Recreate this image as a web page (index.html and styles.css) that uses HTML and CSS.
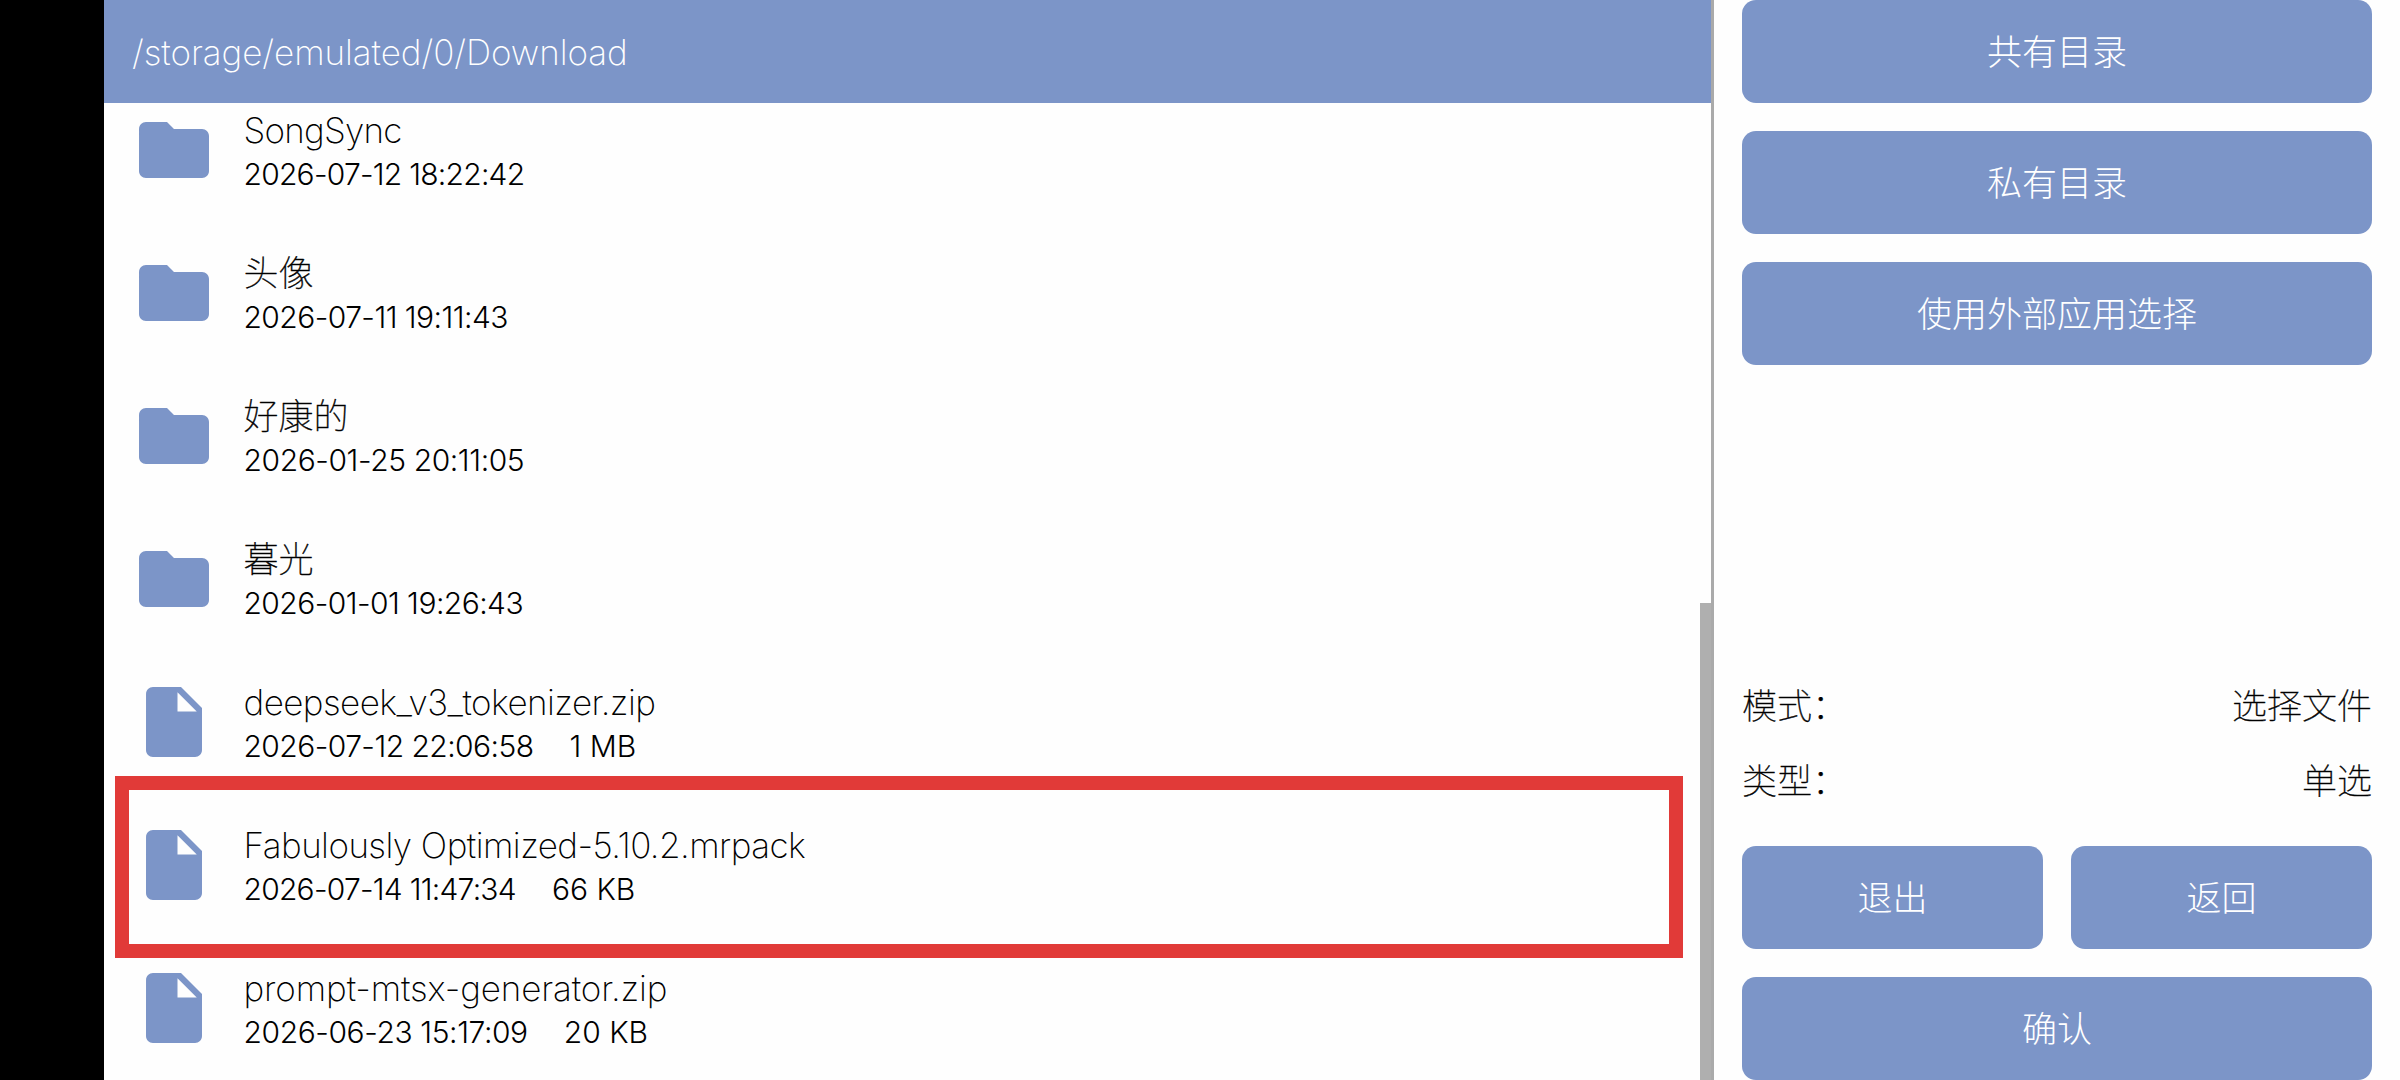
FILE: index.html
```html
<!doctype html>
<html lang="zh-CN">
<head>
<meta charset="UTF-8">
<title>选择文件</title>
<meta name="viewport" content="width=device-width, initial-scale=1.0">
<link rel="stylesheet" href="styles.css">
</head>
<body>
<svg width="0" height="0" class="symbols">
  <symbol id="folder" viewBox="0 0 24 24">
    <path d="M10 4H4c-1.1 0-1.99.9-1.99 2L2 18c0 1.1.9 2 2 2h16c1.1 0 2-.9 2-2V8c0-1.1-.9-2-2-2h-8l-2-2z"/>
  </symbol>
  <symbol id="file" viewBox="0 0 24 24">
    <path d="M6 2c-1.1 0-1.99.9-1.99 2L4 20c0 1.1.89 2 1.99 2H18c1.1 0 2-.9 2-2V8l-6-6H6zm7 7V3.5L18.5 9H13z"/>
  </symbol>
</svg>

<main class="browser">
  <header class="path">/storage/emulated/0/Download</header>
  <ul class="list">
    <li class="item">
      <svg class="icon"><use href="#folder"/></svg>
      <div>
        <div class="name tight">SongSync</div>
        <div class="info"><span class="date tight">2026-07-12 18:22:42</span></div>
      </div>
    </li>
    <li class="item">
      <svg class="icon"><use href="#folder"/></svg>
      <div>
        <div class="name han">头像</div>
        <div class="info"><span class="date">2026-07-11 19:11:43</span></div>
      </div>
    </li>
    <li class="item">
      <svg class="icon"><use href="#folder"/></svg>
      <div>
        <div class="name han">好康的</div>
        <div class="info"><span class="date loose">2026-01-25 20:11:05</span></div>
      </div>
    </li>
    <li class="item">
      <svg class="icon"><use href="#folder"/></svg>
      <div>
        <div class="name han">暮光</div>
        <div class="info"><span class="date">2026-01-01 19:26:43</span></div>
      </div>
    </li>
    <li class="item">
      <svg class="icon"><use href="#file"/></svg>
      <div>
        <div class="name snug">deepseek_v3_tokenizer.zip</div>
        <div class="info"><span class="date">2026-07-12 22:06:58</span><span>1 MB</span></div>
      </div>
    </li>
    <li class="item marked">
      <svg class="icon"><use href="#file"/></svg>
      <div>
        <div class="name snug">Fabulously Optimized-5.10.2.mrpack</div>
        <div class="info"><span class="date tight">2026-07-14 11:47:34</span><span>66 KB</span></div>
      </div>
    </li>
    <li class="item">
      <svg class="icon"><use href="#file"/></svg>
      <div>
        <div class="name wide">prompt-mtsx-generator.zip</div>
        <div class="info"><span class="date loose">2026-06-23 15:17:09</span><span>20 KB</span></div>
      </div>
    </li>
  </ul>
  <div class="scrollbar"></div>
</main>

<aside class="side">
  <button>共有目录</button>
  <button>私有目录</button>
  <button>使用外部应用选择</button>
  <dl class="status han">
    <div><dt>模式：</dt><dd>选择文件</dd></div>
    <div><dt>类型：</dt><dd>单选</dd></div>
  </dl>
  <div class="pair">
    <button>退出</button>
    <button>返回</button>
  </div>
  <button>确认</button>
</aside>
</body>
</html>
```
FILE: styles.css
```css
*, *::after {
  box-sizing: border-box;
}
body {
  margin: 0;
  width: 2400px;
  height: 1080px;
  padding-left: 104px;
  display: flex;
  overflow: hidden;
  background: linear-gradient(to right, #000 104px, #fefefe 104px);
  color: #000;
  font-family: Inter, "Noto Sans CJK SC", sans-serif;
  font-size: 35px;
  font-weight: 200;
}
.symbols {
  position: absolute;
}
.browser {
  position: relative;
  width: 1610px;
  border-right: 3px solid #aaa;
}
.path {
  height: 103px;
  padding-left: 28px;
  line-height: 105px;
  letter-spacing: -0.05px;
  background: #7c95c8;
  color: #fff;
}
.list {
  margin: 0;
  padding: 0;
  list-style: none;
}
.item {
  position: relative;
  display: flex;
  gap: 27.5px;
  height: 143px;
  padding: 5px 0 0 28px;
}
.icon {
  width: 84px;
  height: 84px;
  fill: #7c95c8;
}
.name {
  height: 43px;
  line-height: 45px;
  white-space: nowrap;
}
.han {
  font-weight: 100;
  -webkit-text-stroke: 0.4px #000;
}
.info {
  display: flex;
  gap: 36px;
  line-height: 46px;
  font-size: 30px;
  font-weight: 300;
  white-space: nowrap;
}
.date {
  letter-spacing: -0.55px;
}
.tight {
  letter-spacing: -0.75px;
}
.snug {
  letter-spacing: -0.55px;
}
.loose {
  letter-spacing: -0.4px;
}
.wide {
  letter-spacing: -0.12px;
}
/* red frame drawn over the list */
.marked::after {
  content: "";
  position: absolute;
  left: 11px;
  top: -42px;
  width: 1568px;
  height: 182px;
  border: 14px solid #e13a38;
}
.scrollbar {
  position: absolute;
  right: 0;
  top: 603px;
  width: 11px;
  height: 477px;
  background: #afafaf;
}
.side {
  flex: 1;
  display: flex;
  flex-direction: column;
  gap: 28px;
  padding: 0 28px;
}
button {
  height: 103px;
  flex: none;
  border: 0;
  padding: 0 0 5px;
  border-radius: 14px;
  background: #7c95c8;
  color: #fff;
  font: inherit;
  font-weight: 300;
}
.status {
  margin: auto 0 0;
}
.status div {
  display: flex;
  justify-content: space-between;
  height: 75px;
  line-height: 77px;
}
.status dd {
  margin: 0;
}
.pair {
  display: flex;
  gap: 28px;
}
.pair button {
  flex: 1;
}
```
